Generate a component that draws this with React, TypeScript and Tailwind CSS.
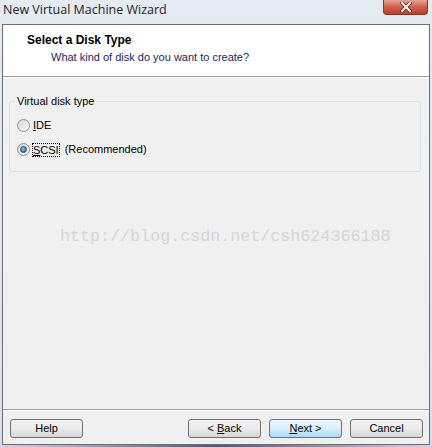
import React from 'react';

const tahoma = { fontFamily: '"Liberation Sans", Arial, sans-serif' };

function Radio({ checked }: { checked?: boolean }) {
  return (
    <span className="relative inline-block w-[13px] h-[13px] rounded-full border border-[#8e8f8f] bg-gradient-to-br from-[#d4d4d4] to-[#fbfbfb]">
      {checked && (
        <span className="absolute left-[2px] top-[2px] w-[7px] h-[7px] rounded-full bg-[radial-gradient(circle_at_40%_35%,#7cc4f4,#1c5d8e)] border border-[#1a4f7a]" />
      )}
    </span>
  );
}

function Btn({ children, primary }: { children: React.ReactNode; primary?: boolean }) {
  return (
    <div
      className={
        'w-[73px] h-[19px] rounded-[3px] border flex items-center justify-center text-[11px] text-black ' +
        (primary
          ? 'border-[#3c7fb1] bg-gradient-to-b from-[#eaf6fd] via-[#d9f0fc] to-[#a7d9f5]'
          : 'border-[#707070] bg-gradient-to-b from-[#f2f2f2] via-[#ebebeb] to-[#d6d6d6]')
      }
      style={tahoma}
    >
      {children}
    </div>
  );
}

export default function App() {
  return (
    <div className="w-[432px] h-[447px] bg-gradient-to-b from-[#e4ebf2] to-[#d7e0e9] flex flex-col overflow-hidden">
      {/* title bar */}
      <div className="h-[24px] flex items-start justify-between pl-[3px] pr-[4px]">
        <span className="text-[12.5px] text-[#1e1e1e] mt-[1px]" style={{ fontFamily: '"Open Sans", "Noto Sans", sans-serif' }}>
          New Virtual Machine Wizard
        </span>
        <div className="w-[45px] h-[15px] rounded-b-[4px] border border-[#8a3328] border-t-0 bg-gradient-to-b from-[#e8a493] via-[#d0604a] to-[#b8402c] flex items-center justify-center">
          <svg width="12" height="10" viewBox="0 0 12 10">
            <path d="M2 1 L10 9 M10 1 L2 9" stroke="#5a1d14" strokeWidth="3.4" strokeLinecap="square" />
            <path d="M2 1 L10 9 M10 1 L2 9" stroke="#ffffff" strokeWidth="2" strokeLinecap="square" />
          </svg>
        </div>
      </div>

      {/* window body */}
      <div className="mx-[2px] w-[428px] h-[421px] border border-[#6e6e6e] bg-[#f0f0f0] flex flex-col" style={tahoma}>
        <div className="h-[52px] bg-white border-b border-[#a0a0a0] pl-[24px] pt-[8px]">
          <div className="text-[12px] font-bold text-black leading-[15px]">Select a Disk Type</div>
          <div className="text-[11px] text-[#1c1c6a] leading-[14px] pl-[24px] mt-[2px]">What kind of disk do you want to create?</div>
        </div>
        <div className="h-px bg-white" />

        <div className="flex-1 relative">
          {/* group box */}
          <div className="relative mt-[23px] ml-[6px] mr-[8px] h-[71px] border border-[#d5dfe5] rounded-[3px]">
            <span className="absolute -top-[8px] left-[5px] px-[2px] bg-[#f0f0f0] text-[11px] leading-[14px] text-black">
              Virtual disk type
            </span>
            <div className="flex flex-col gap-[11px] pt-[17px] pl-[7px] text-[11px] text-black">
              <div className="flex items-center gap-[3px] h-[13px]">
                <Radio />
                <span><span className="underline">I</span>DE</span>
              </div>
              <div className="flex items-center gap-[3px] h-[13px]">
                <Radio checked />
                <span className="outline outline-1 outline-dotted outline-black leading-[12px]"><span className="underline">S</span>CSI</span>
                <span className="ml-[3px]">(Recommended)</span>
              </div>
            </div>
          </div>

          {/* watermark */}
          <div
            className="absolute left-[57px] top-[146px] text-[16.7px] text-[#d6d6d6]"
            style={{ fontFamily: '"Liberation Mono", "DejaVu Sans Mono", monospace' }}
          >
            http://blog.csdn.net/csh624366188
          </div>
        </div>

        <div className="h-px bg-[#a0a0a0] mx-0" />
        <div className="h-px bg-white" />
        <div className="h-[33px] flex items-start pt-[8px] pl-[7px] pr-[6px]">
          <Btn>Help</Btn>
          <div className="flex-1" />
          <div className="flex gap-[8px]">
            <Btn>&lt; <span className="underline ml-[3px]">B</span>ack</Btn>
            <Btn primary><span className="underline">N</span>ext &gt;</Btn>
            <Btn>Cancel</Btn>
          </div>
        </div>
      </div>
      <div className="flex-1 bg-gradient-to-r from-[#cfd8e0] via-[#3b5f86] to-[#cfd8e0]" />
    </div>
  );
}
